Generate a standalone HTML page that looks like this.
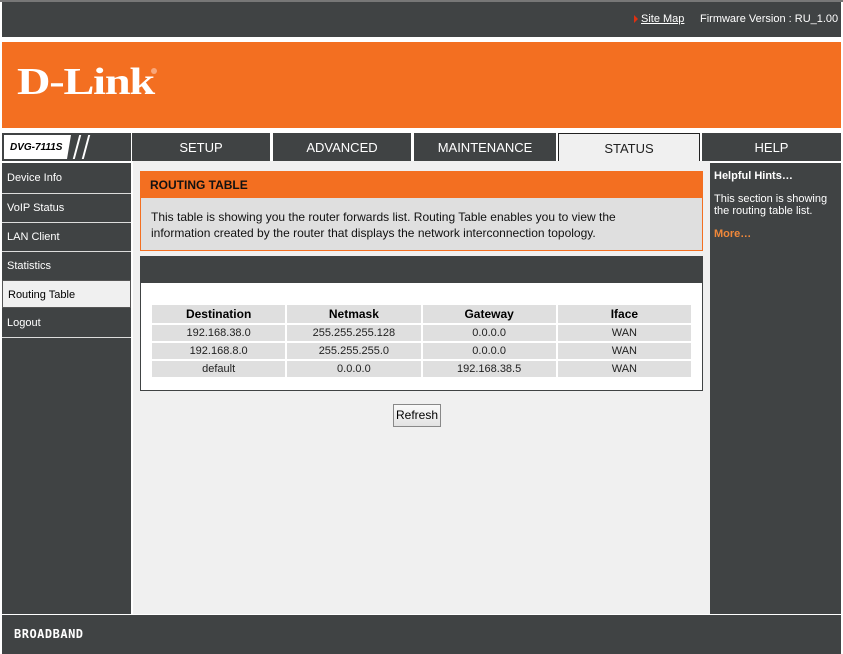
<!DOCTYPE html>
<html><head><style>
*{margin:0;padding:0;box-sizing:border-box}
body{width:843px;height:654px;background:#fff;font-family:"Liberation Sans",sans-serif;font-size:11px;position:relative;overflow:hidden}
.a{position:absolute}
.dk{background:#404344}
.tab{position:absolute;top:133px;height:28px;background:#404344;color:#fff;font-size:13px;text-align:center;line-height:29px}
.side{position:absolute;left:2px;width:129px;height:28px;background:#404344;color:#fff;font-size:11px;line-height:28px;padding-left:5px}
table{border-collapse:separate;border-spacing:2px;position:absolute;left:150px;top:303px;width:543px;table-layout:fixed}
td{background:#dfdfdf;text-align:center;font-size:11px;height:16px;color:#222}
th{background:#dfdfdf;font-size:12px;height:18px;font-weight:bold;color:#000}
</style></head><body>
<div class="a" style="left:0;top:0;width:843px;height:2px;background:#777"></div>
<div class="a dk" style="left:2px;top:2px;width:839px;height:35px"></div>
<div class="a" style="left:634px;top:15px;width:0;height:0;border-left:4px solid #e03010;border-top:4px solid transparent;border-bottom:4px solid transparent"></div>
<div class="a" style="left:641px;top:13px;color:#fff;font-size:11px;text-decoration:underline">Site Map</div>
<div class="a" style="left:700px;top:13px;color:#fff;font-size:11px">Firmware Version : RU_1.00</div>
<div class="a" style="left:2px;top:42px;width:839px;height:86px;background:#f36f21"></div>
<div class="a" style="left:17px;top:60px;color:#fff;font-family:'Liberation Serif',serif;font-weight:bold;font-size:38px;letter-spacing:-1px;transform:scaleX(1.22);transform-origin:left">D-Link</div>
<div class="a" style="left:151px;top:68px;width:6px;height:6px;border-radius:50%;background:#f9a77a"></div>
<div class="a" style="left:2px;top:133px;width:129px;height:28px;background:#404344"></div>
<div class="a" style="left:4px;top:135px;width:63px;height:24px;background:#fff;font-style:italic;font-weight:bold;font-size:10px;line-height:25px;padding-left:6px">DVG-7111S</div>
<div class="a" style="left:67px;top:135px;width:0;height:0;border-right:4px solid transparent;border-top:24px solid #fff"></div>
<div class="a" style="left:76px;top:135px;width:2px;height:24px;background:#fff;transform:skewX(-15deg)"></div>
<div class="a" style="left:85px;top:135px;width:2px;height:24px;background:#fff;transform:skewX(-15deg)"></div>
<div class="tab" style="left:132px;width:138px">SETUP</div>
<div class="tab" style="left:273px;width:138px">ADVANCED</div>
<div class="tab" style="left:414px;width:142px">MAINTENANCE</div>
<div class="tab" style="left:558px;width:142px;background:#f0f0f0;color:#222;border:1px solid #222;border-bottom:none">STATUS</div>
<div class="tab" style="left:702px;width:139px">HELP</div>
<div class="a dk" style="left:2px;top:163px;width:129px;height:451px"></div>
<div class="a" style="left:133px;top:161px;width:577px;height:453px;background:#f0f0f0"></div>
<div class="a dk" style="left:710px;top:163px;width:131px;height:451px"></div>
<div class="side" style="top:164px">Device Info</div>
<div class="side" style="top:193px;border-top:1px solid #ddd">VoIP Status</div>
<div class="side" style="top:222px;border-top:1px solid #ddd">LAN Client</div>
<div class="side" style="top:251px;border-top:1px solid #ddd">Statistics</div>
<div class="side" style="top:280px;background:#f0f0f0;color:#000;border:1px solid #555">Routing Table</div>
<div class="side" style="top:309px">Logout</div>
<div class="a" style="left:2px;top:337px;width:129px;height:1px;background:#ddd"></div>
<div class="a" style="left:714px;top:170px;color:#fff;font-size:11px;font-weight:bold">Helpful Hints…</div>
<div class="a" style="left:714px;top:193px;color:#fff;font-size:11px;line-height:12px">This section is showing<br>the routing table list.</div>
<div class="a" style="left:714px;top:228px;color:#f0883a;font-size:11px;font-weight:bold">More…</div>
<div class="a" style="left:140px;top:171px;width:563px;height:80px;border:1px solid #f36f21;background:#dfdfdf"></div>
<div class="a" style="left:140px;top:171px;width:563px;height:27px;background:#f36f21;color:#111;font-size:12px;font-weight:bold;padding:7px 0 0 10px">ROUTING TABLE</div>
<div class="a" style="left:151px;top:209px;font-size:12px;line-height:16px;color:#111">This table is showing you the router forwards list. Routing Table enables you to view the<br>information created by the router that displays the network interconnection topology.</div>
<div class="a" style="left:140px;top:256px;width:563px;height:135px;border:1px solid #404344;background:#fff"></div>
<div class="a dk" style="left:140px;top:256px;width:563px;height:27px"></div>
<table>
<tr><th>Destination</th><th>Netmask</th><th>Gateway</th><th>Iface</th></tr>
<tr><td>192.168.38.0</td><td>255.255.255.128</td><td>0.0.0.0</td><td>WAN</td></tr>
<tr><td>192.168.8.0</td><td>255.255.255.0</td><td>0.0.0.0</td><td>WAN</td></tr>
<tr><td>default</td><td>0.0.0.0</td><td>192.168.38.5</td><td>WAN</td></tr>
</table>
<div class="a" style="left:393px;top:404px;width:48px;height:23px;border:1px solid #888;background:linear-gradient(#fafafa,#e2e2e2);font-size:12px;text-align:center;line-height:21px">Refresh</div>
<div class="a dk" style="left:2px;top:615px;width:839px;height:39px"></div>
<div class="a" style="left:14px;top:627px;color:#fff;font-family:'DejaVu Sans Mono',monospace;font-weight:bold;font-size:12px;letter-spacing:0.5px">BROADBAND</div>
</body></html>
